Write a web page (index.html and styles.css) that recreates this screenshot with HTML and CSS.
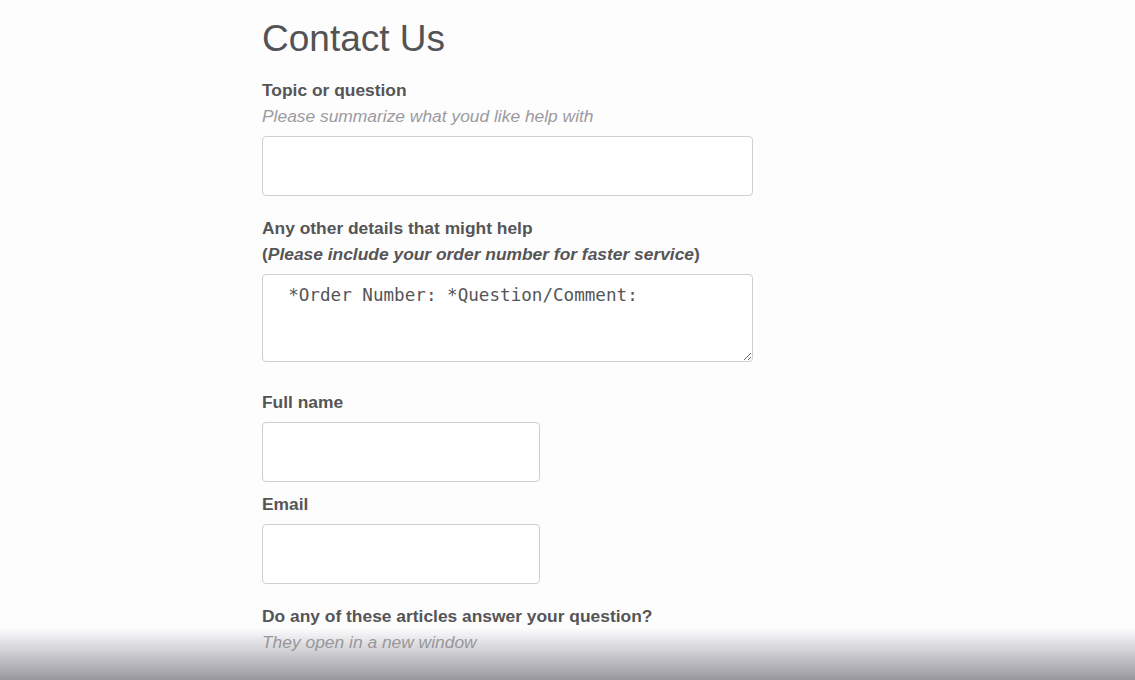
FILE: index.html
```html
<!DOCTYPE html>
<html lang="en">
<head>
<meta charset="utf-8">
<title>Contact Us</title>
<link rel="stylesheet" href="styles.css">
</head>
<body>
<main class="page">
  <h1 class="title">Contact Us</h1>

  <div class="field">
    <label class="label" for="topic">Topic or question</label>
    <p class="hint">Please summarize what youd like help with</p>
    <input class="control control-wide" id="topic" type="text">
  </div>

  <div class="field field-details">
    <label class="label" for="details">Any other details that might help</label>
    <p class="label">(<em>Please include your order number for faster service</em>)</p>
    <textarea class="control control-area" id="details">  *Order Number: *Question/Comment:</textarea>
  </div>

  <div class="field field-name">
    <label class="label" for="fullname">Full name</label>
    <input class="control control-narrow" id="fullname" type="text">
  </div>

  <div class="field field-email">
    <label class="label" for="email">Email</label>
    <input class="control control-narrow" id="email" type="email">
  </div>

  <div class="field field-articles">
    <p class="label">Do any of these articles answer your question?</p>
    <p class="hint">They open in a new window</p>
  </div>
</main>
<div class="fade"></div>
</body>
</html>
```

FILE: styles.css
```css
html, body {
  margin: 0;
  padding: 0;
  background: #fdfdfe;
}

body {
  font-family: "Liberation Sans", Arial, Helvetica, sans-serif;
  color: #555557;
  overflow: hidden;
}

.page {
  width: 611px;
  margin: 0 auto;
  display: flex;
  flex-direction: column;
}

.title {
  margin: 17px 0 16px;
  font-size: 37px;
  line-height: 44px;
  font-weight: 400;
  color: #535355;
}

.field {
  display: flex;
  flex-direction: column;
  align-items: flex-start;
}

.field-details {
  margin-top: 19px;
}

.field-name {
  margin-top: 27px;
}

.field-email {
  margin-top: 9px;
}

.field-articles {
  margin-top: 19px;
}

.label {
  display: block;
  margin: 0;
  font-size: 17.4px;
  line-height: 26px;
  font-weight: 700;
  color: #555557;
}

.label em {
  font-style: italic;
}

.hint {
  margin: 0;
  font-size: 17.4px;
  line-height: 26px;
  font-style: italic;
  color: #9b9b9e;
}

.control {
  display: block;
  box-sizing: border-box;
  margin: 7px 0 0;
  height: 60px;
  border: 1px solid #cfcfd2;
  border-radius: 4px;
  background: #ffffff;
  outline: none;
}

.control-wide {
  width: 491px;
}

.control-narrow {
  width: 278px;
}

.control-area {
  width: 491px;
  height: 88px;
  padding: 10px 4px 0;
  font-family: "DejaVu Sans Mono", "Liberation Mono", monospace;
  font-size: 17.6px;
  line-height: 21px;
  color: #555557;
  resize: both;
  overflow: auto;
}

.fade {
  position: fixed;
  left: 0;
  right: 0;
  bottom: 0;
  height: 52px;
  pointer-events: none;
  background: linear-gradient(to bottom,
    rgba(140, 139, 147, 0) 0%,
    rgba(140, 139, 147, 0.35) 40%,
    rgba(140, 139, 147, 0.9) 100%);
}
```
